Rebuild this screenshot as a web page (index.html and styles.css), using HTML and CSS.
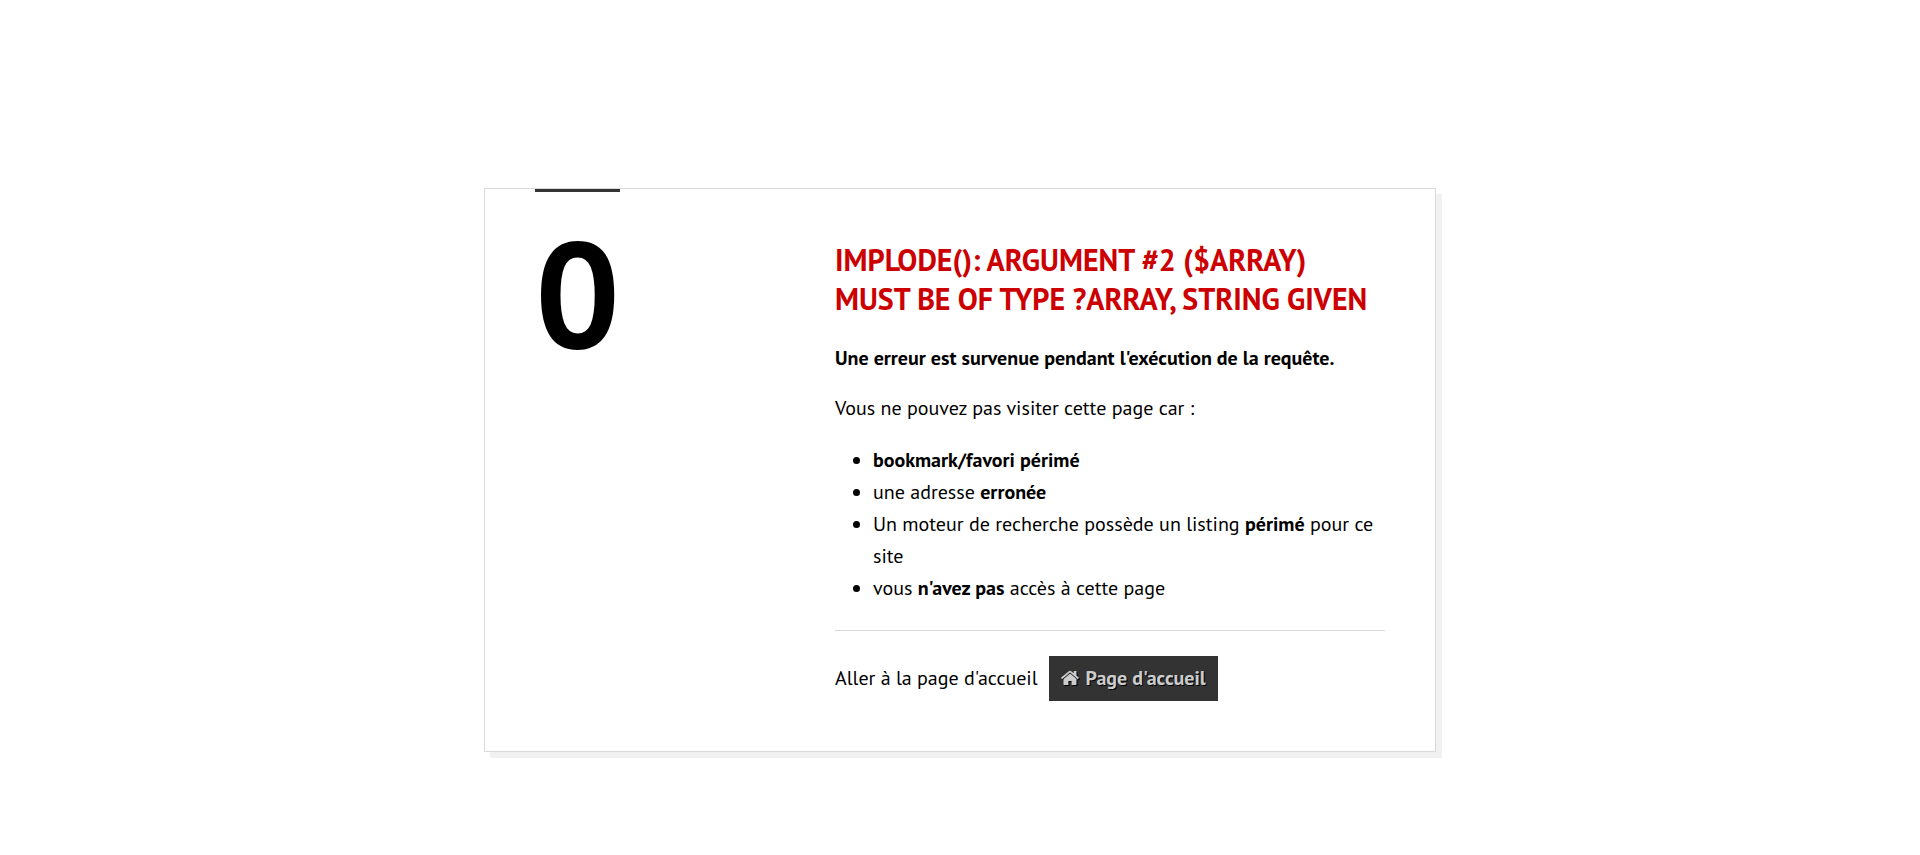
FILE: index.html
```html
<!DOCTYPE html>
<html lang="fr">
<head>
<meta charset="utf-8">
<meta name="viewport" content="width=device-width, initial-scale=1">
<title>Erreur 0</title>
<link rel="stylesheet" href="styles.css">
</head>
<body>
<main class="error-card">
  <div class="code-column"><span class="error-code">0</span></div>
  <div class="details">
    <h1 class="title">implode(): Argument #2 ($array) must be of type ?array, string given</h1>
    <p class="text"><strong>Une erreur est survenue pendant l'exécution de la requête.</strong></p>
    <p class="text">Vous ne pouvez pas visiter cette page car :</p>
    <ul class="reasons">
      <li><strong>bookmark/favori périmé</strong></li>
      <li>une adresse <strong>erronée</strong></li>
      <li>Un moteur de recherche possède un listing <strong>périmé</strong> pour ce site</li>
      <li>vous <strong>n'avez pas</strong> accès à cette page</li>
    </ul>
    <div class="home-row">
      <span>Aller à la page d'accueil</span>
      <a class="home-button" href="#"><svg class="home-icon" viewBox="0 0 18 16" aria-hidden="true"><path d="M9 3.600 15.500 9v5.300a.7.7 0 0 1-.7.7H10.600V11H7.400V15H3.200a.7.7 0 0 1-.7-.7V9z"/><path d="M17.800 7.600 15.500 5.700V1.300a.4.4 0 0 0-.4-.4h-2a.4.4 0 0 0-.4.4v2L10.200 1.200a1.900 1.900 0 0 0-2.400 0L.2 7.600a.4.4 0 0 0 0 .5l.6.8a.4.4 0 0 0 .6 0L9 2.600l7.600 6.300a.4.4 0 0 0 .6 0l.6-.8a.4.4 0 0 0 0-.5z"/></svg><span>Page d'accueil</span></a>
    </div>
  </div>
</main>
</body>
</html>
```
FILE: styles.css
```css
* { box-sizing: border-box; }
body {
  margin: 0;
  padding: 188px 24px 96px;
  background: #fff;
  color: #000;
  font-family: "PT Sans", Lato, sans-serif;
  font-size: 20px;
  line-height: 32px;
}
.error-card {
  display: grid;
  grid-template-columns: 6fr 11fr;
  max-width: 952px;
  margin: 0 auto;
  padding: 0 50px 50px;
  border: 1px solid #d9d9d9;
  background: #fff;
  box-shadow: 6px 6px 0 #f1f1f1;
}
.error-code {
  display: inline-block;
  border-top: 3px solid #333;
  padding-top: 25px;
  font-family: "PT Sans", "Open Sans", sans-serif;
  font-size: 150px;
  font-weight: 700;
  line-height: 150px;
}
.details { padding-top: 51px; }
.title {
  margin: 0 0 24px;
  color: #c00;
  font-size: 30px;
  line-height: 39px;
  text-transform: uppercase;
  text-rendering: optimizeSpeed;
}
.text { margin: 0 0 18px; }
.reasons {
  margin: 0 0 26px;
  padding: 2px 0 0 38px;
}
.home-row {
  display: flex;
  align-items: flex-start;
  flex-wrap: wrap;
  gap: 11px;
  padding-top: 25px;
  border-top: 1px solid #d9d9d9;
}
.home-row > span { padding-top: 6px; }
.home-button {
  display: inline-flex;
  align-items: center;
  gap: 7px;
  padding: 6px 12px 7px;
  background: #333;
  color: #ccc;
  font-weight: 700;
  text-decoration: none;
  text-shadow: 1px 1px 0 #000;
}
.home-icon {
  width: 18px;
  height: 16px;
  fill: #ccc;
  filter: drop-shadow(1px 1px 0 #000);
}
```
